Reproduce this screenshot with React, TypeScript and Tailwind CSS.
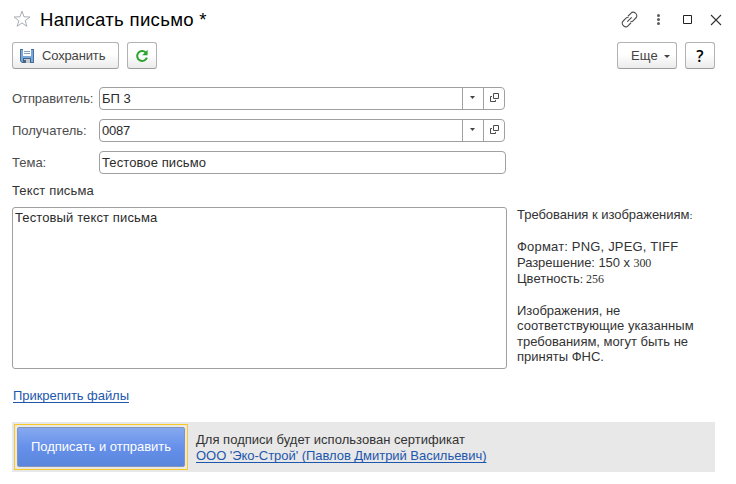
import type { ReactNode } from "react";

function StarIcon() {
  return (
    <svg width="18" height="18" viewBox="0 0 18 18" fill="none" stroke="#a9aeb6" strokeWidth="1">
      <path d="M9 1.2 11 6.8 17 7 12.2 10.6 13.9 16.3 9 13 4.1 16.3 5.8 10.6 1 7 7 6.8Z" />
    </svg>
  );
}

function FloppyIcon() {
  return (
    <svg width="14" height="14" viewBox="0 0 14 14">
      <path d="M0 0H14V14H2L0 12Z" fill="#45719f" />
      <path d="M1 1H13V13H2.4L1 11.6Z" fill="#7ba7d9" />
      <rect x="3" y="0" width="8" height="7" fill="#fff" />
      <path d="M4 2.5H10M4 4.5H10" stroke="#8aa0b8" />
      <rect x="3" y="9" width="8" height="5" fill="#3f6489" />
      <rect x="4" y="10" width="6" height="4" fill="#c3cbd3" />
      <rect x="4" y="11" width="2" height="3" fill="#4b6580" />
    </svg>
  );
}

function RefreshIcon() {
  return (
    <svg width="14" height="14" viewBox="0 0 14 14">
      <path d="M10.6 3.3A5 5 0 1 0 11.9 8.6" fill="none" stroke="#2ba52e" strokeWidth="2" />
      <path d="M12.6 0.8V6.2H7.2Z" fill="#2ba52e" />
    </svg>
  );
}

function LinkIcon() {
  return (
    <svg width="17" height="17" viewBox="0 0 17 17" fill="none" stroke="#4d4d4d" strokeWidth="1.1" strokeLinecap="round">
      <path d="M7.2 5 10 2.2A2.9 2.9 0 0 1 14.6 2.4A2.9 2.9 0 0 1 14.8 7L12 9.8C11.4 10.4 10.6 10.6 10 10.4" />
      <path d="M9.8 12 7 14.8A2.9 2.9 0 0 1 2.4 14.6A2.9 2.9 0 0 1 2.2 10L5 7.2C5.6 6.6 6.4 6.4 7 6.6" />
      <path d="M6.6 10.4 10.4 6.6" />
    </svg>
  );
}

function OpenIcon() {
  return (
    <svg width="9" height="9" viewBox="0 0 9 9" fill="none" stroke="#4a4a4a">
      <path d="M3.5 0.5H8.5V5.5H3.5Z" />
      <path d="M2 3.5H0.5V8.5H5.5V7" />
    </svg>
  );
}

function Caret({ wide }: { wide?: boolean }) {
  return (
    <svg width={wide ? 6 : 5} height="3" viewBox="0 0 5 3" preserveAspectRatio="none">
      <path d="M0 0H5L2.5 3Z" fill="#444" />
    </svg>
  );
}

function Button({ className, children }: { className: string; children: ReactNode }) {
  return (
    <button
      className={`flex h-[27px] shrink-0 items-center rounded-[3px] border border-[#b2b2b2] border-b-[#9c9c9c] bg-linear-to-b from-white from-45% to-[#ebebeb] text-[13px] text-[#444] ${className}`}
    >
      {children}
    </button>
  );
}

function Field({ label, labelClass, value, valueClass, picker }: { label: string; labelClass: string; value: string; valueClass: string; picker?: boolean }) {
  return (
    <div className="flex h-[23px] items-stretch">
      <label className="w-[87px] shrink-0 text-[13px] leading-[23px] text-[#4d4d4d]">
        <span className={labelClass}>{label}</span>
      </label>
      <div className={`flex rounded-[4px] border border-[#a0a0a0] bg-white ${picker ? "w-[406px]" : "w-[407px]"}`}>
        <div className="grow pl-[2px] text-[13px] leading-[21px] text-[#2b2b2b]">
          <span className={valueClass}>{value}</span>
        </div>
        {picker && (
          <>
            <div className="flex w-[21px] justify-center border-l border-[#a0a0a0] pt-[8px] pr-px">
              <Caret />
            </div>
            <div className="flex w-[21px] border-l border-[#a0a0a0] pt-[5px] pl-[6px]">
              <OpenIcon />
            </div>
          </>
        )}
      </div>
    </div>
  );
}

export default function App() {
  return (
    <div className="h-[484px] w-[736px] overflow-hidden bg-white pl-3 font-['Liberation_Sans',Arial,sans-serif] whitespace-nowrap text-[#333]">
      <header className="flex h-[42px] items-start">
        <div className="mt-[10px] ml-px">
          <StarIcon />
        </div>
        <h1 className="mt-[8px] ml-[9px] grow text-[18.6px] leading-[24px] text-black">
          <span className="tracking-[0.3px]">Написать письмо *</span>
        </h1>
        <div className="mt-[11px] mr-[14px] flex h-[17px] items-center">
          <LinkIcon />
          <svg className="ml-[19px]" width="3" height="11" viewBox="0 0 3 11" fill="#5c5c5c">
            <circle cx="1.5" cy="1.5" r="1.5" />
            <circle cx="1.5" cy="5.5" r="1.5" />
            <circle cx="1.5" cy="9.5" r="1.5" />
          </svg>
          <svg className="ml-[23px]" width="9" height="9" viewBox="0 0 9 9">
            <path d="M0.5 0.5H8.5V8.5H0.5Z" fill="none" stroke="#222" />
          </svg>
          <svg className="ml-[18px]" width="12" height="12" viewBox="0 0 12 12">
            <path d="M1 1 11 11M11 1 1 11" stroke="#333" strokeWidth="1.1" />
          </svg>
        </div>
      </header>

      <div className="flex w-[703px]">
        <Button className="w-[107px] pl-[7px]">
          <FloppyIcon />
          <span className="ml-2 tracking-[-0.15px]">Сохранить</span>
        </Button>
        <Button className="ml-2 w-[30px] justify-center">
          <RefreshIcon />
        </Button>
        <div className="grow" />
        <Button className="w-[60px] pl-[13px]">
          <span className="tracking-[0.1px]">Еще</span>
          <span className="mt-[2px] ml-[6px] flex">
            <Caret wide />
          </span>
        </Button>
        <Button className="ml-2 w-[30px] justify-center">
          <span className="font-['Open_Sans',sans-serif] text-[16px] leading-none font-semibold text-black">?</span>
        </Button>
      </div>

      <form className="mt-[18px] flex flex-col gap-[9px]">
        <Field label="Отправитель:" labelClass="tracking-[-0.08px]" value="БП 3" valueClass="" picker />
        <Field label="Получатель:" labelClass="" value="0087" valueClass="tracking-[-0.2px]" picker />
        <Field label="Тема:" labelClass="" value="Тестовое письмо" valueClass="tracking-[0.1px]" />
      </form>

      <div className="mt-[9px] h-[24px] text-[13px] leading-4 tracking-[0.15px]">Текст письма</div>

      <div className="flex h-[162px]">
        <div className="w-[495px] rounded-[3px] border border-[#a0a0a0] pt-[2px] pl-[2px] text-[13px] leading-4 tracking-[0.12px] text-[#2b2b2b]">
          Тестовый текст письма
        </div>
        <div className="ml-[10px] text-[13px] leading-4">
          <p className="h-4 tracking-[-0.03px]">
            Требования к изображениям<span className="font-['Liberation_Serif',serif] text-[11px] leading-none">:</span>
          </p>
          <p className="mt-4 h-4 tracking-[0.18px]">Формат: PNG, JPEG, TIFF</p>
          <p className="h-4 tracking-[-0.07px]">
            Разрешение: 150 x <span className="font-['Liberation_Serif',serif] text-[12px] leading-none">300</span>
          </p>
          <p className="h-4">
            Цветность<span className="font-['Liberation_Serif',serif] text-[12px] leading-none">: 256</span>
          </p>
          <p className="mt-4 h-[15px]">Изображения, не</p>
          <p className="h-4 tracking-[0.04px]">соответствующие указанным</p>
          <p className="h-[15px]">требованиям, могут быть не</p>
          <p className="h-4">приняты ФНС.</p>
        </div>
      </div>

      <div className="mt-[19px] ml-px text-[13px] leading-4 tracking-[-0.05px]">
        <a className="text-[#1d57ad] underline underline-offset-2 [text-decoration-skip-ink:none]">Прикрепить файлы</a>
      </div>

      <footer className="mt-[18px] flex h-[50px] w-[703px] bg-[#e8e8e8] p-[2px]">
        <div className="h-[46px] w-[174px] border border-[#f8c922] p-[2px]">
          <button className="h-[40px] w-[168px] rounded-[2px] border border-[#8795b4] bg-linear-to-b from-[#86a9f0] via-[#6690ea] to-[#5a86dc] text-[13px] text-white">
            <span>Подписать и отправить</span>
          </button>
        </div>
        <div className="mt-[8px] ml-2 text-[13px] leading-4">
          <p className="tracking-[0.02px]">Для подписи будет использован сертификат</p>
          <a className="tracking-[-0.04px] text-[#1d57ad] underline underline-offset-2 [text-decoration-skip-ink:none]">ООО 'Эко-Строй' (Павлов Дмитрий Васильевич)</a>
        </div>
      </footer>
    </div>
  );
}
